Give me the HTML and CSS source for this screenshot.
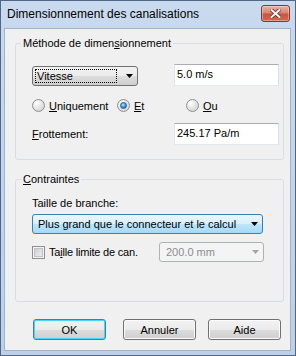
FILE: index.html
```html
<!DOCTYPE html>
<html lang="fr">
<head>
<meta charset="UTF-8">
<title>Dimensionnement des canalisations</title>
<link rel="stylesheet" href="styles.css">
</head>
<body>

<div class="window">
    <div class="titlebar">
        <span class="title">Dimensionnement des canalisations</span>
        <button class="close" title="Fermer">
            <svg width="11" height="9" viewBox="0 0 11 9">
                <path d="M1.5 1 L9.5 8 M9.5 1 L1.5 8" stroke="#6b2a22" stroke-width="3.6" stroke-linecap="square"/>
                <path d="M1.5 1 L9.5 8 M9.5 1 L1.5 8" stroke="#fff" stroke-width="2" stroke-linecap="square"/>
            </svg>
        </button>
    </div>

    <div class="client">
        <fieldset class="group group-method">
            <legend>Méthode de dimen<u>s</u>ionnement</legend>
            <div class="group-body">
                <div class="grid-row row-speed">
                    <div class="combo combo-speed">
                        <span class="combo-value focused">Vitesse</span>
                        <svg class="arrow" width="7" height="4" viewBox="0 0 7 4"><polygon points="0,0 7,0 3.5,4"/></svg>
                    </div>
                    <div class="textbox">5.0 m/s</div>
                </div>

                <div class="radios">
                    <label class="radio"><span class="radio-dot"></span><span><u>U</u>niquement</span></label>
                    <label class="radio"><span class="radio-dot checked"></span><span><u>E</u>t</span></label>
                    <label class="radio"><span class="radio-dot"></span><span><u>O</u>u</span></label>
                </div>

                <div class="grid-row row-friction">
                    <span class="field-label"><u>F</u>rottement:</span>
                    <div class="textbox">245.17 Pa/m</div>
                </div>
            </div>
        </fieldset>

        <fieldset class="group group-constraints">
            <legend><u>C</u>ontraintes</legend>
            <div class="group-body">
                <div class="field-label branch-label">Taille de branche:</div>
                <div class="combo combo-hot">
                    <span class="combo-value">Plus grand que le connecteur et le calcul</span>
                    <svg class="arrow" width="7" height="4" viewBox="0 0 7 4"><polygon points="0,0 7,0 3.5,4"/></svg>
                </div>
                <div class="grid-row row-limit">
                    <label class="check-label">
                        <span class="check"></span>
                        <span class="check-text">Ta<u>i</u>lle limite de can.</span>
                    </label>
                    <div class="combo combo-disabled">
                        <span class="combo-value">200.0 mm</span>
                        <svg class="arrow" width="7" height="4" viewBox="0 0 7 4"><polygon points="0,0 7,0 3.5,4"/></svg>
                    </div>
                </div>
            </div>
        </fieldset>

        <div class="buttons">
            <button class="btn btn-default">OK</button>
            <button class="btn btn-cancel">Annuler</button>
            <button class="btn btn-help">Aide</button>
        </div>
    </div>
</div>

</body>
</html>
```

FILE: styles.css
```css
body {
    margin: 0;
    font-family: "Liberation Sans", Arial, sans-serif;
    font-size: 11px;
    color: #000;
    background: #fff;
}
.window {
    width: 296px;
    height: 356px;
    box-sizing: border-box;
    border: 1px solid #4f6886;
    background: linear-gradient(#c9daef, #bcd0e9);
    padding: 0 4px 4px 3px;
    display: flex;
    flex-direction: column;
}
.titlebar {
    height: 27px;
    display: flex;
    justify-content: space-between;
    padding-left: 3px;
}
.title {
    font-size: 12px;
    line-height: 27px;
}
.close {
    width: 29px;
    height: 17px;
    margin: 4px 1px 0 0;
    padding: 0;
    border: 1px solid #7a3a35;
    border-radius: 3px;
    background: linear-gradient(#eab1a5 0%, #d98572 45%, #c8563f 55%, #cf6a52 100%);
    box-shadow: inset 0 0 0 1px rgba(255, 255, 255, 0.35);
    display: flex;
    align-items: center;
    justify-content: center;
}
.client {
    flex: 1;
    background: #f0f0f0;
    border: 1px solid #9fb3cd;
    display: flex;
    flex-direction: column;
}

/* group boxes */
.group {
    margin: 8px 6px 0 10px;
    padding: 0 0 14px 5px;
    border: 1px solid #d5dfe5;
    border-radius: 3px;
    min-width: 0;
}
.group legend {
    padding: 0 2px;
    line-height: 13px;
}
.group-body {
    padding: 14px 0 0 11px;
}
.group-constraints {
    margin-top: 13px;
    padding-bottom: 39px;
}
.group-constraints .group-body {
    padding-top: 11px;
}
.grid-row {
    display: grid;
    grid-template-columns: 142px 105px;
    align-items: end;
}
.field-label {
    line-height: 13px;
}
.row-friction {
    margin-top: 10px;
    align-items: center;
}

/* combos */
.combo {
    height: 20px;
    box-sizing: border-box;
    border: 1px solid #707070;
    border-radius: 3px;
    background: linear-gradient(#f2f2f2 0%, #ebebeb 50%, #dddddd 50%, #cfcfcf 100%);
    display: flex;
    align-items: center;
    justify-content: space-between;
    padding: 0 4px 0 2px;
}
.combo-speed {
    width: 106px;
}
.combo-value {
    line-height: 12px;
    padding: 0 1px;
    border: 1px dotted transparent;
}
.combo-value.focused {
    border-color: #000;
    width: 78px;
}
.combo-hot {
    width: 231px;
    margin-top: 4px;
    padding-left: 3px;
    border-color: #3c7fb1;
    background: linear-gradient(#eaf6fd 0%, #d9f0fc 50%, #bee6fd 50%, #a7d9f5 100%);
}
.combo-disabled {
    padding-left: 4px;
    border-color: #adb2b5;
    background: #f4f4f4;
    color: #8d8d8d;
}
.combo-disabled .arrow {
    fill: #a4a4a4;
}

/* text boxes */
.textbox {
    height: 22px;
    box-sizing: border-box;
    border: 1px solid;
    border-color: #abadb3 #dbdfe6 #e3e9ef #e2e3ea;
    background: #fff;
    padding: 3px 0 0 2px;
    line-height: 13px;
}

/* radios */
.radios {
    display: grid;
    grid-template-columns: 85px 69px auto;
    margin-top: 12px;
    height: 15px;
    align-items: center;
}
.radio {
    display: flex;
    align-items: center;
    gap: 4px;
}
.radio-dot {
    width: 13px;
    height: 13px;
    box-sizing: border-box;
    border: 1px solid #8e8f8f;
    border-radius: 50%;
    background: radial-gradient(circle at 35% 30%, #ffffff 0%, #e6e6e6 45%, #cdcdcd 100%);
    display: flex;
    align-items: center;
    justify-content: center;
}
.radio-dot.checked::after {
    content: "";
    width: 5px;
    height: 5px;
    border-radius: 50%;
    border: 1px solid #1d5c95;
    background: radial-gradient(circle at 40% 35%, #b6e4ff 0%, #3d9ae0 50%, #1563a8 100%);
}

/* checkbox row */
.row-limit {
    grid-template-columns: 127px 105px;
    margin-top: 8px;
    align-items: center;
}
.check-label {
    display: flex;
    align-items: center;
    gap: 4px;
}
.check {
    width: 13px;
    height: 13px;
    box-sizing: border-box;
    border: 1px solid #8f8f8f;
    background: linear-gradient(135deg, #c5c9cf, #f4f4f4);
    box-shadow: inset 0 0 0 1px #f4f4f4, inset 0 0 0 2px #bfc3c9;
    flex: none;
}
.check-text {
    white-space: nowrap;
    letter-spacing: -0.2px;
}

/* dialog buttons */
.buttons {
    display: flex;
    margin-top: 17px;
    padding-left: 28px;
}
.btn {
    width: 73px;
    height: 21px;
    padding: 0;
    font-family: inherit;
    font-size: 11px;
    color: #000;
    border: 1px solid #707070;
    border-radius: 3px;
    background: linear-gradient(#f2f2f2 0%, #ebebeb 50%, #dddddd 50%, #cfcfcf 100%);
    box-shadow: inset 0 0 0 1px #fcfcfc;
}
.btn-default {
    border-color: #3c7fb1;
    box-shadow: inset 0 0 0 1px #48d5fb;
}
.btn-cancel {
    margin-left: 17px;
}
.btn-help {
    margin-left: 12px;
}
```
